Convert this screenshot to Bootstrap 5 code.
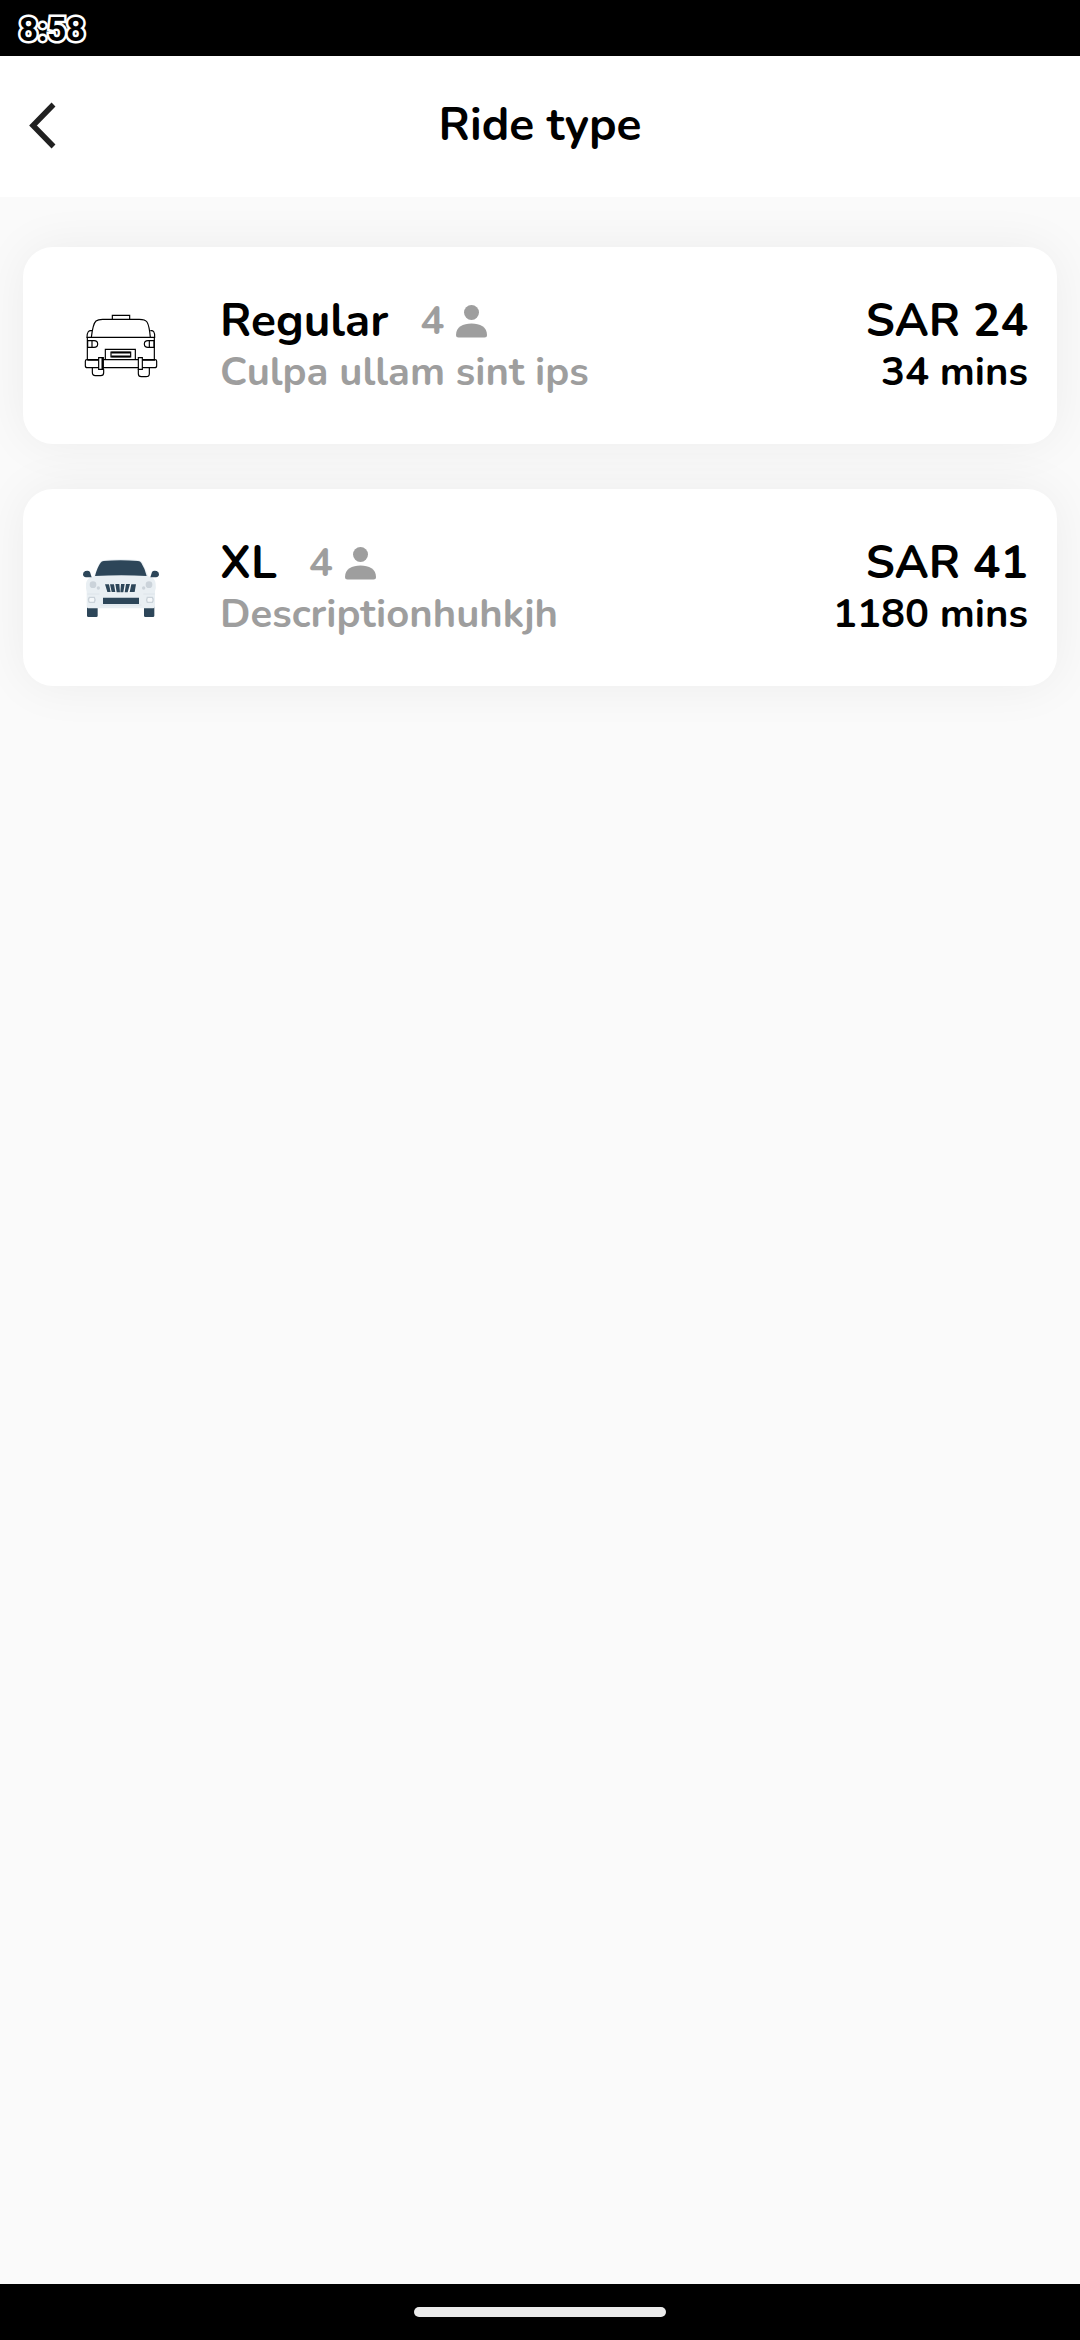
<!DOCTYPE html>
<html lang="en">
<head>
<meta charset="utf-8">
<meta name="viewport" content="width=device-width, initial-scale=1">
<title>Ride type</title>
<link href="https://cdn.jsdelivr.net/npm/bootstrap@5.3.0/dist/css/bootstrap.min.css" rel="stylesheet">
<style>
  body { background: #fafafa; color: #000; font-family: Nunito, Lato, "Open Sans", sans-serif; }
  .status-bar { height: 56px; padding: 0 19px; background: #000; }
  .status-clock { font: 700 33px/60px Roboto, sans-serif; color: #000; -webkit-text-stroke: 5px #fff; paint-order: stroke fill; }
  .app-bar { height: 141px; padding-bottom: 3px; background: #fff; }
  .app-side { width: 84px; }
  .back-btn { width: 84px; height: 84px; line-height: 0; }
  .screen-title, .ride-name, .ride-fare { font-size: 46px; line-height: 52px; font-weight: 700; }
  .screen-title { margin: 0; }
  .ride-list { padding: 50px 23px; gap: 45px; }
  .ride-card { display: flex; align-items: flex-start; height: 197px; padding: 48px 29px 0 47px; border: 0; border-radius: 30px; background: #fff; color: #000; text-align: left; box-shadow: 0 0 50px rgba(0, 0, 0, .06); }
  .ride-icon { width: 100px; height: 90px; margin: 5px 50px 0 0; flex: none; }
  .ride-note, .ride-seats, .ride-time { font-size: 40px; line-height: 50px; font-weight: 700; }
  .ride-note, .ride-seats { color: #9e9e9e; }
  .ride-seats { gap: 12px; margin-left: 32px; }
  .nav-strip { height: 56px; background: #000; }
  .nav-pill { width: 252px; height: 10px; background: #ebebeb; }
</style>
<script src="https://cdn.jsdelivr.net/npm/bootstrap@5.3.0/dist/js/bootstrap.bundle.min.js"></script>
</head>
<body class="d-flex flex-column min-vh-100">
<div class="status-bar"><span class="status-clock">8:58</span></div>
<header class="app-bar d-flex align-items-center">
  <div class="app-side">
    <button type="button" class="back-btn btn p-0 border-0" aria-label="Back">
      <svg width="84" height="84" viewBox="0 0 84 84" fill="none" stroke="#212121" stroke-width="5.500"><path d="M53.500 21.500 33 42.500 53.500 63.500"/></svg>
    </button>
  </div>
  <h1 class="screen-title flex-grow-1 text-center">Ride type</h1>
  <div class="app-side"></div>
</header>
<main class="ride-list d-flex flex-column flex-grow-1">
  <button type="button" class="ride-card">
    <svg class="ride-icon" viewBox="0 0 300 270" fill="none" stroke="#000" stroke-width="3.500" aria-hidden="true">
      <path d="M127 57V46h52v11M64 112c3-25 6-42 14-49 6-5 12-5 20-5h110c10 0 18 1 23 8 5 8 8 24 10 46zM52 112v68M253 112v68"/>
      <path d="M66 92c-10-2-15 4-15 20h13M241 92c9-2 14 4 13 20h-13"/>
      <path d="M53 122h19q11 0 11 10t-11 10H53zM66 122v20M252 122h-18q-11 0-11 10t11 10h18zM238 122v20"/>
      <path d="M106 178v-30h90v30M123 156h59v15h-59z"/>
      <path d="M124 158h57M124 169h57" stroke-width="5"/>
      <path d="M51 179h204q5 0 5 5v13q0 6-6 6H52q-6 0-6-6v-13q0-5 5-5z"/>
      <path d="M52 180h46M217 180h38" stroke-width="4"/>
      <path d="M67 203v14q0 10 9 10h16q9 0 9-9v-10M205 208v13q0 9 9 9h14q10 0 10-9v-18"/>
      <path d="M86 173h14v35H86zM205 173h12v35h-12z" fill="#fff"/>
      <path d="M97 174v34" stroke-width="5"/>
    </svg>
    <div class="flex-grow-1">
      <div class="d-flex align-items-center"><span class="ride-name">Regular</span>
        <span class="ride-seats d-flex align-items-center">4
          <svg width="31" height="34" viewBox="0 0 31 34" fill="#9e9e9e" role="img" aria-label="passengers"><circle cx="15.500" cy="8.500" r="7.500"/><path d="M0 31C0 23 7 19.500 15.500 19.500S31 23 31 31Q31 33.500 28.500 33.500H2.500Q0 33.500 0 31z"/></svg>
        </span></div>
      <div class="ride-note">Culpa ullam sint ips</div>
    </div>
    <div class="text-end">
      <div class="ride-fare">SAR 24</div>
      <div class="ride-time">34 mins</div>
    </div>
  </button>
  <button type="button" class="ride-card">
    <svg class="ride-icon" viewBox="0 -9 300 270" aria-hidden="true">
      <path d="M51 178h32v34q0 4-4 4H55q-4 0-4-4zM222 178h31v34q0 4-4 4h-23q-4 0-4-4z" fill="#2d4659"/>
      <path d="M48 116c3-13 9-18 24-22L87 56q4-9 14-10c30-4 73-4 105 0q9 1 13 10l16 38c15 4 20 9 22 22q2 12-2 22v44q0 8-8 8H57q-7 0-7-8v-42q-3-12-2-24z" fill="#e9eff3"/>
      <path d="M75 93q7-27 17-40 3-5 9-5 50-5 103 0 7 0 10 6 11 17 16 39-75-5-155 0z" fill="#2d4659"/>
      <path d="M65 97H48q-9-1-9-9 0-8 7-10 11-2 14 3zM241 97h17q9-1 9-9 0-8-7-10-11-2-14 3z" fill="#2d4659"/>
      <path d="M104 119q49-6 95 0l-5 21q-40 6-84 0z" fill="#f5f8fa"/>
      <path d="M105 118l12 0 5 23h-10zM120 118h12l4 23h-11zM136 117h12l2 25h-10zM153 117h11l-4 25h-9zM168 117h12l-7 25h-9zM184 118h14l-4 23h-15z" fill="#2d4659"/>
      <path d="M99 158h108v19H99z" fill="#2d4659"/>
      <g fill="#cbd3da"><circle cx="69" cy="119" r="10"/><circle cx="237" cy="119" r="10"/><circle cx="85" cy="129" r="5"/><circle cx="221" cy="129" r="5"/></g>
      <path d="M58 157h15q4 6 0 15H58q-5-8 0-15zM232 157h15q5 7 0 15h-15q-4-8 0-15z" fill="#f5f8fa" stroke="#cbd3da" stroke-width="4"/>
      <path d="M52 147h36M220 147h34M92 180h122" stroke="#d8e0e6" stroke-width="2"/>
    </svg>
    <div class="flex-grow-1">
      <div class="d-flex align-items-center"><span class="ride-name">XL</span>
        <span class="ride-seats d-flex align-items-center">4
          <svg width="31" height="34" viewBox="0 0 31 34" fill="#9e9e9e" role="img" aria-label="passengers"><circle cx="15.500" cy="8.500" r="7.500"/><path d="M0 31C0 23 7 19.500 15.500 19.500S31 23 31 31Q31 33.500 28.500 33.500H2.500Q0 33.500 0 31z"/></svg>
        </span></div>
      <div class="ride-note">Descriptionhuhkjh</div>
    </div>
    <div class="text-end">
      <div class="ride-fare">SAR 41</div>
      <div class="ride-time">1180 mins</div>
    </div>
  </button>
</main>
<footer class="nav-strip d-flex align-items-center justify-content-center"><div class="nav-pill rounded-pill"></div></footer>
</body>
</html>
